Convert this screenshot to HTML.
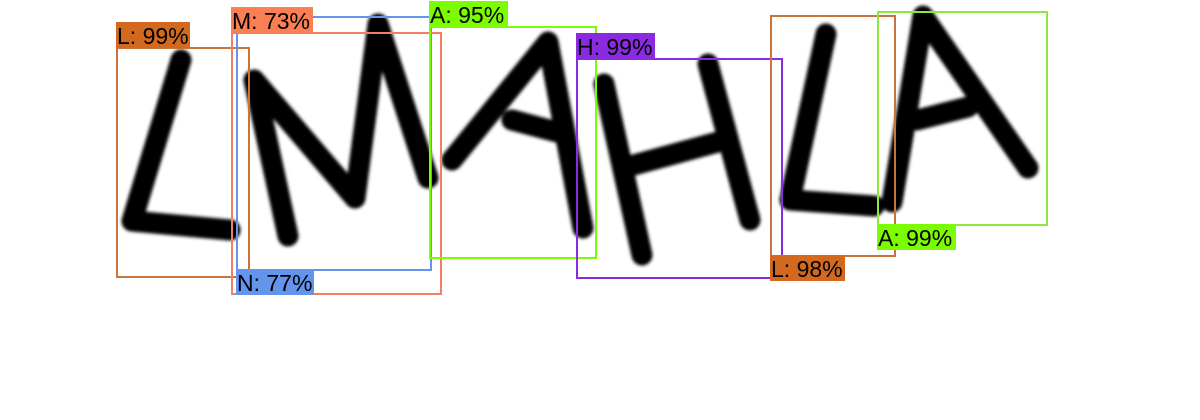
<!DOCTYPE html>
<html><head><style>
body{margin:0;width:1200px;height:420px;background:#fff;position:relative;overflow:hidden;font-family:"Liberation Sans",sans-serif}
.b{position:absolute;border:2px solid;box-sizing:border-box}
.l{position:absolute;height:26px;font-size:23px;line-height:29px;color:#000;white-space:nowrap;padding-left:1px;box-sizing:border-box;overflow:hidden}
svg{position:absolute;left:0;top:0}
</style></head><body>
<svg width="1200" height="420"><defs><filter id="f"><feGaussianBlur stdDeviation="1.6"/></filter></defs>
<g fill="none" stroke="#000" stroke-width="21" stroke-linecap="round" stroke-linejoin="round" filter="url(#f)">
<polyline points="181,60 132,221 230,230"/>
<polyline points="288,236 254,80 355,198 378,24 428,178"/>
<polyline points="452,160 548,42 583,228"/>
<line x1="512" y1="120" x2="557" y2="132"/>
<line x1="604" y1="84" x2="642" y2="255"/>
<line x1="708" y1="64" x2="750" y2="220"/>
<line x1="630" y1="166" x2="718" y2="142"/>
<polyline points="826,34 790,200 874,206"/>
<polyline points="892,202 923,16 1028,168"/>
<line x1="917" y1="120" x2="968" y2="107"/>
</g></svg>
<div class="b" style="left:116px;top:47px;width:134px;height:231px;border-color:#c8743a"></div>
<div class="l" style="left:116px;top:22px;width:74px;background:#d2691e">L: 99%</div>
<div class="b" style="left:236px;top:16px;width:196px;height:255px;border-color:#6495ed"></div>
<div class="b" style="left:231px;top:32px;width:211px;height:263px;border-color:#f08060"></div>
<div class="l" style="left:231px;top:7px;width:82px;background:#fa7f55">M: 73%</div>
<div class="l" style="left:236px;top:269px;width:78px;background:#6495ed">N: 77%</div>
<div class="b" style="left:429px;top:26px;width:168px;height:233px;border-color:#7cfc00"></div>
<div class="l" style="left:429px;top:1px;width:79px;background:#7cfc00">A: 95%</div>
<div class="b" style="left:576px;top:58px;width:207px;height:221px;border-color:#8a2be2"></div>
<div class="l" style="left:576px;top:33px;width:79px;background:#8a2be2">H: 99%</div>
<div class="b" style="left:770px;top:15px;width:126px;height:242px;border-color:#c8743a"></div>
<div class="l" style="left:770px;top:255px;width:75px;background:#d2691e">L: 98%</div>
<div class="b" style="left:877px;top:11px;width:171px;height:215px;border-color:#8ce83a"></div>
<div class="l" style="left:877px;top:224px;width:79px;background:#7cfc00">A: 99%</div>
</body></html>
